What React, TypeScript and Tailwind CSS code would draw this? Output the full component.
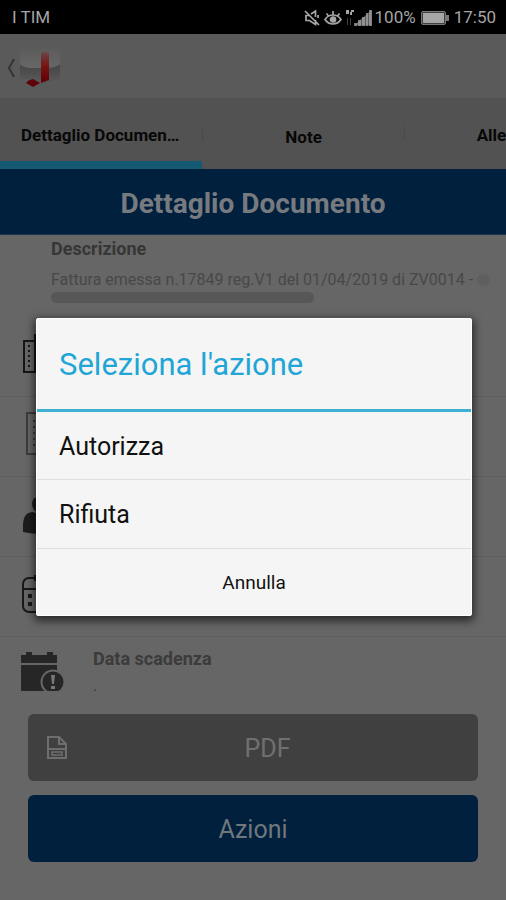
import type { ReactNode } from "react";

function StatusBar() {
  return (
    <div className="flex h-[34px] shrink-0 items-center justify-between bg-black pt-[2px] pr-[10px] pl-3 text-[17px] text-[#a6a6a6]">
      <span>I TIM</span>
      <div className="flex items-center">
        <svg className="mr-[3px] h-[18px] w-[18px]" viewBox="0 0 18 18" fill="none" stroke="currentColor" strokeWidth="1.7">
          <path d="M2 2l14 14M6.500 6.500H3v5h3.500l6 4V11M8 5l4.500-3v6M15 6v3" />
        </svg>
        <svg className="mr-[3px] h-[18px] w-[18px]" viewBox="0 0 18 18" fill="none" stroke="currentColor" strokeWidth="1.7">
          <path d="M1 10.500c4-6 12-6 16 0c-4 6-12 6-16 0zM9 5.500V2M4.500 7L2.500 4.500M13.500 7l2-2.500" />
          <circle cx="9" cy="10.500" r="2.500" fill="currentColor" />
        </svg>
        <svg className="mr-[3px] h-[18px] w-[27px]" viewBox="0 0 27 18" fill="currentColor">
          <path d="M1 1h3v4H1zM6 1h3v2H6zM5 3h2v3H5z" />
          <path d="M2 9h1v7H2zM5 9h1v7H5z" opacity=".4" />
          <path d="M9 16.500L26.500 1v15.500z" opacity=".55" />
          <path d="M9 14h3v3H9zM13 11h3v6h-3zM17 8h3v9h-3zM21 4h2v13h-2zM24 1h3v16h-3z" opacity=".7" />
        </svg>
        <span>100%</span>
        <svg className="mr-[5px] ml-[5px] h-[16px] w-[28px]" viewBox="0 0 28 16" fill="currentColor">
          <rect x=".5" y="1.500" width="24" height="13" rx="1.500" fill="#3f3f3f" stroke="#777" />
          <rect x="2" y="3" width="21" height="10" />
          <path d="M25 5h3v6h-3z" fill="#777" />
        </svg>
        <span>17:50</span>
      </div>
    </div>
  );
}

function AppLogo() {
  return (
    <svg className="h-[42px] w-[42px]" viewBox="0 0 42 42">
      <defs>
        <linearGradient id="lid" x1="0" y1="0" x2="0" y2="1">
          <stop offset="0" stopColor="#5c5c5c" />
          <stop offset="1" stopColor="#676767" />
        </linearGradient>
        <linearGradient id="body" x1="0" y1="0" x2="0" y2="1">
          <stop offset="0" stopColor="#464646" />
          <stop offset="1" stopColor="#5a5a5a" />
        </linearGradient>
        <linearGradient id="ribbon" x1="0" y1="0" x2="0" y2="1">
          <stop offset="0" stopColor="#6b4644" />
          <stop offset=".5" stopColor="#78100f" />
          <stop offset="1" stopColor="#5f0005" />
        </linearGradient>
      </defs>
      <path d="M1 18h40v14L28 36l-27-5z" fill="url(#body)" />
      <path d="M4 2h35l2 3v12q-4 4-14 4H14Q4 21 1 17V6z" fill="url(#lid)" />
      <path d="M22 6q4-2 8 0v27l-8 3z" fill="url(#ribbon)" />
      <path d="M7 36q2-3 7-4l7 4-7 4z" fill="#5c0308" />
    </svg>
  );
}

function BuildingIcon() {
  return (
    <svg className="h-[46px] w-[42px]" viewBox="0 0 42 46" fill="none" stroke="#161616" strokeWidth="2">
      <path d="M12 7H2v31h10M13 0h18v38H13z" />
      <path d="M7 11v24" strokeDasharray="2 3" />
    </svg>
  );
}

function DocumentIcon() {
  return (
    <svg className="h-[50px] w-[34px]" viewBox="0 0 34 50" fill="none" stroke="#3c3c3c">
      <path d="M1 1h32v41H1z" strokeWidth="2" />
      <path d="M7 9h20M7 15h20M7 21h20M7 27h20M7 33h20" strokeWidth="2" strokeDasharray="2 1" />
    </svg>
  );
}

function PersonIcon() {
  return (
    <svg className="h-[38px] w-[38px]" viewBox="0 0 38 38" fill="#1c1c1c">
      <circle cx="19" cy="6" r="9" />
      <path d="M1 34v-6Q1 14 11 14l8 3 8-3q10 0 10 14v6q-18 4-36 0z" />
    </svg>
  );
}

function CalendarIcon() {
  return (
    <svg className="h-[44px] w-[40px]" viewBox="0 0 40 44" fill="none" stroke="#181818" strokeWidth="2">
      <rect x="1" y="3" width="38" height="34" rx="6" />
      <path d="M1 14h38M13 0v6M27 0v6" />
      <path d="M8 19v4M8 27v4M16 19v4M16 27v4" strokeWidth="4" />
    </svg>
  );
}

function DeadlineIcon() {
  return (
    <svg className="h-[41px] w-[43px]" viewBox="0 0 43 41" fill="#262626">
      <path d="M0 3h5V0h6v3h15V0h6v3h4v8H0zM0 13h36v26H0z" />
      <circle cx="32" cy="30" r="12.500" fill="#666" />
      <circle cx="32" cy="30" r="10.500" />
      <path d="M30 23h4l-1 9h-2zM30 34h4v3h-4z" fill="#777" />
      <path d="M0 39h43v2H0z" fill="#666" />
    </svg>
  );
}

function PdfIcon() {
  return (
    <svg className="h-[24px] w-[20px]" viewBox="0 0 20 24" fill="none" stroke="#6e6e6e" strokeWidth="2">
      <path d="M1 1h11l7 7v14H1zM12 1v7h7M1 13h18" />
      <path d="M5 16h10v3H5z" strokeWidth="1.500" />
    </svg>
  );
}

function IconRow({ children }: { children: ReactNode }) {
  return (
    <div className="flex h-20 shrink-0 items-center border-b border-[#5d5d5d] pl-[22px]">
      {children}
    </div>
  );
}

function ActionDialog() {
  return (
    <div className="absolute inset-x-0 top-[34px] bottom-0 flex items-center justify-center pr-[34px] pl-9">
      <div
        role="dialog"
        aria-labelledby="dialog-title"
        className="w-full max-w-lg rounded-[2px] border border-white bg-[#f5f5f5] text-[#111] shadow-[0_3px_8px_2px_rgba(0,0,0,0.6)]"
      >
        <h2
          id="dialog-title"
          className="border-b-[3px] border-[#3fafd3] px-[22px] pt-7 pb-[26px] text-[31px] leading-[36px] text-[#1fa6d6]"
        >
          Seleziona l'azione
        </h2>
        <button className="block h-[68px] w-full border-b border-[#dedede] px-[22px] pt-[2px] text-left text-[25px]">
          Autorizza
        </button>
        <button className="block h-[69px] w-full border-b border-[#dedede] px-[22px] pt-[2px] text-left text-[25px]">
          Rifiuta
        </button>
        <button className="block h-[66px] w-full pt-[2px] text-center text-[19px]">Annulla</button>
      </div>
    </div>
  );
}

export default function App() {
  return (
    <div className="relative flex min-h-screen flex-col overflow-hidden bg-[#666] font-['Roboto',sans-serif]">
      <StatusBar />

      <header className="flex h-16 shrink-0 items-center bg-[#5a5a5a] pt-1 pl-[7px]">
        <button aria-label="Indietro" className="flex items-center gap-1">
          <svg className="h-[20px] w-[8px]" viewBox="0 0 8 20" fill="none" stroke="#343434" strokeWidth="2">
            <path d="M7 1L2 10l5 9" />
          </svg>
          <AppLogo />
        </button>
      </header>

      <nav className="flex h-[71px] shrink-0 overflow-hidden bg-[#525252] text-[17px] font-bold text-[#080808]">
        <button className="w-2/5 shrink-0 truncate border-b-8 border-[#155a72] px-[21px] pt-[13px]">
          Dettaglio Documento
        </button>
        <button className="my-7 w-2/5 shrink-0 border-x border-[#494949] pt-[3px] leading-none">
          Note
        </button>
        <button className="w-2/5 shrink-0 pt-[5px]">Allegati</button>
      </nav>

      <h1 className="h-[66px] shrink-0 border-b border-[#17364f] bg-[#00203d] pt-[3px] text-center text-[28px] leading-[64px] font-bold text-[#777b80]">
        Dettaglio Documento
      </h1>

      <main className="flex flex-1 flex-col">
        <section className="h-[82px] shrink-0 pr-4 pl-[51px]">
          <h2 className="pt-[3px] text-[18px] leading-[22px] font-bold text-[#363636]">Descrizione</h2>
          <p className="mt-2 flex text-[16px] leading-[24px] whitespace-nowrap text-[#484848]">
            Fattura emessa n.17849 reg.V1 del 01/04/2019 di ZV0014 -
            <span className="my-[6px] ml-1 w-4 rounded-full bg-[#5f5f5f]" />
          </p>
          <div className="h-[11px] w-3/5 rounded-md bg-[#575757]" />
        </section>
        <IconRow>
          <BuildingIcon />
        </IconRow>
        <IconRow>
          <div className="pl-1">
            <DocumentIcon />
          </div>
        </IconRow>
        <IconRow>
          <PersonIcon />
        </IconRow>
        <IconRow>
          <CalendarIcon />
        </IconRow>
        <section className="flex h-[77px] shrink-0 gap-[29px] pt-[15px] pl-[21px]">
          <DeadlineIcon />
          <div className="text-[#3b3b3b]">
            <h2 className="text-[18px] leading-[14px] font-bold">Data scadenza</h2>
            <p className="mt-[10px] text-[16px] leading-[20px]">.</p>
          </div>
        </section>

        <div className="flex flex-col gap-[14px] px-7">
          <button className="flex h-[67px] items-center rounded-md bg-[#404040] pr-[10px] pl-[19px] text-[25px] text-[#707070]">
            <PdfIcon />
            <span className="flex-1 pt-[2px] text-center">PDF</span>
          </button>
          <button className="h-[67px] rounded-md bg-[#00203d] pt-[3px] text-[25px] text-[#70777d]">
            Azioni
          </button>
        </div>
      </main>

      <ActionDialog />
    </div>
  );
}
